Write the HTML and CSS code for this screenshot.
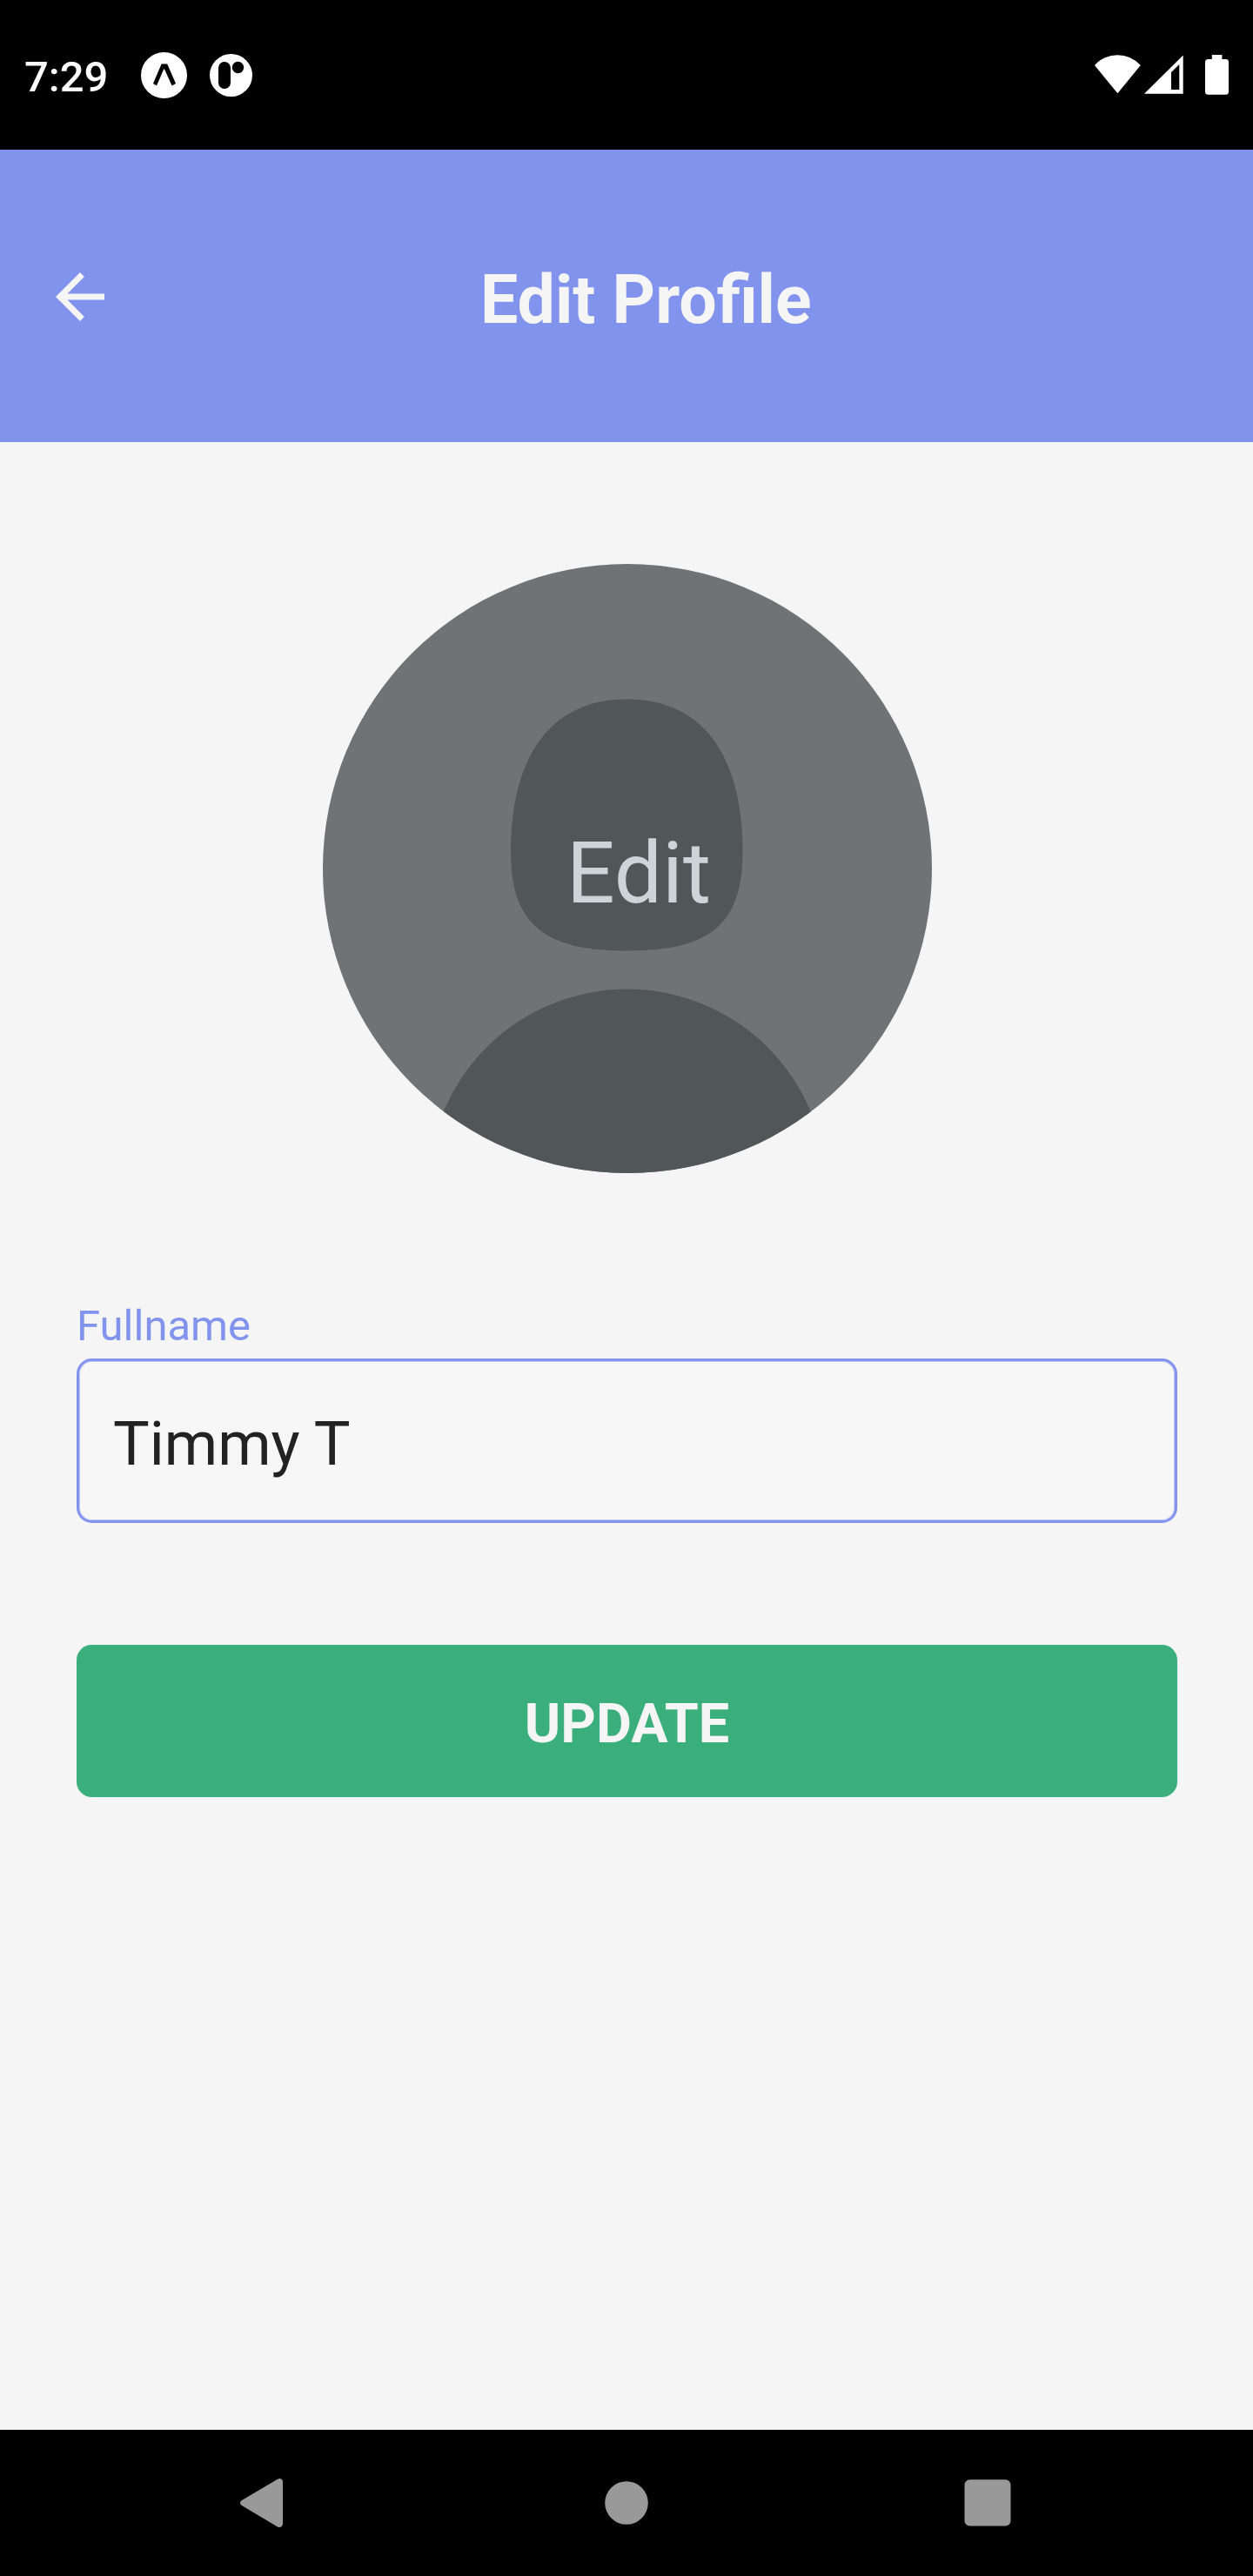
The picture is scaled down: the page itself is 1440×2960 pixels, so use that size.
FILE: index.html
```html
<!DOCTYPE html>
<html lang="en">
<head>
<meta charset="utf-8">
<title>Edit Profile</title>
<link rel="stylesheet" href="styles.css">
</head>
<body>
<div class="screen">
  <div class="status">
    <span class="time">7:29</span>
    <svg class="app-icon" width="53" height="53" viewBox="0 0 53 53"><circle cx="26.5" cy="26.5" r="26.5" fill="#fff"/><path d="M23.6 13.5h6.6L40 36l-4.400 2.400L27 19.500h-.8L18 38.400 14 36z" fill="#000"/></svg>
    <svg class="app-icon second" width="49" height="49" viewBox="0 0 49 49"><circle cx="24.5" cy="24.5" r="24.5" fill="#fff"/><rect x="10" y="9" width="14" height="31" rx="7" fill="#000"/><circle cx="32.500" cy="15.500" r="6.700" fill="#000"/></svg>
    <svg class="system" width="154" height="46" viewBox="0 0 154 46" fill="#fff">
      <path d="M0 12Q11 .2 26.400 .2T52.800 12L26.400 44.300z"/>
      <path fill-rule="evenodd" d="M57 44.700L101.700 .5V44.700zM88 20V40H97.300V11z"/>
      <path d="M134.800 0H146.400V5H150.500A3.500 3.500 0 0 1 154 8.500V42.200A3.500 3.500 0 0 1 150.500 45.700H130.500A3.500 3.500 0 0 1 127 42.200V8.500A3.500 3.500 0 0 1 130.500 5H134.800z"/>
    </svg>
  </div>
  <header class="header">
    <svg class="back" width="56" height="56" viewBox="0 0 56 56"><path d="M28 0l4.900 4.900L13.500 24.500H56v7H13.500L32.900 51.100 28 56 0 28z" fill="#f5f5f5"/></svg>
    <h1 class="title">Edit Profile</h1>
  </header>
  <main class="content">
    <div class="avatar">
      <svg class="person" width="700" height="700" viewBox="0 0 700 700" fill="#515659"><path d="M349.500 155.500C441 155.500 482.500 226 482.500 331C482.500 418 440 444.500 349.500 444.500S216 418 216 331C216 226 258 155.500 349.500 155.500z"/><circle cx="349.700" cy="717" r="228.500"/></svg>
      <span class="avatar-text">Edit</span>
    </div>
    <label class="label" for="fullname">Fullname</label>
    <input class="input" id="fullname" type="text" value="Timmy T">
    <button class="update" type="button">UPDATE</button>
  </main>
  <nav class="nav">
    <svg class="nav-icons" width="886" height="58" viewBox="0 0 886 58" fill="#999"><path d="M43 .7C46 -1 49 1 49 4V52C49 55 46 57 43 55.400L1.900 31C-.6 29.500 -.6 26.500 1.900 25z"/><circle cx="444" cy="28" r="24.800"/><rect x="832.500" y="1.300" width="53" height="53.300" rx="6"/></svg>
  </nav>
</div>
</body>
</html>
```
FILE: styles.css
```css
* { box-sizing: border-box; }
body { margin: 0; font-family: Roboto, sans-serif; background: #f5f5f5; }
svg { display: block; flex: none; }
.screen { width: 1440px; height: 2960px; display: flex; flex-direction: column; background: #f5f5f5; }
.status { height: 172px; background: #000; color: #fff; display: flex; align-items: flex-start; padding: 0 28px; }
.time { width: 134px; margin-top: 60px; font-size: 49px; line-height: 57px; font-weight: 500; }
.app-icon { margin-top: 60px; }
.app-icon.second { margin: 62px 0 0 26px; }
.system { margin: 63px 0 0 auto; }
.header { height: 336px; background: #8293ed; color: #f5f5f5; display: flex; align-items: flex-start; padding-left: 64px; }
.back { margin-top: 141px; }
.title { margin: 128px 0 0 432px; font-size: 77px; line-height: 90px; font-weight: 700; white-space: nowrap; }
.content { flex: 1; padding: 140px 87px 0 88px; display: flex; flex-direction: column; }
.avatar { width: 700px; height: 700px; margin-left: 283px; border-radius: 50%; overflow: hidden; background: #717276; display: grid; }
.person, .avatar-text { grid-area: 1 / 1; }
.avatar-text { margin: 298px 0 0 280px; font-size: 98px; line-height: 115px; color: #ced3d7; z-index: 1; }
.label { margin-top: 147px; height: 66px; font-size: 49px; line-height: 57px; color: #8293ed; }
.input { height: 189px; width: 1265px; border: 3px solid #8293ed; border-radius: 17.5px; box-shadow: inset 0 0 0 1px #bcc5f3; background: #f7f7f7; padding: 7px 39px 0; font: 70px/82px Roboto, sans-serif; color: #222; outline: 0; }
.update { margin-top: 140px; height: 175px; border: 0; border-radius: 17.5px; background: #3aaf7c; color: #f5f5f5; font: 700 63px/73px Roboto, sans-serif; padding: 6px 0 0; }
.nav { height: 168px; background: #000; padding: 56px 0 0 276px; }
```
